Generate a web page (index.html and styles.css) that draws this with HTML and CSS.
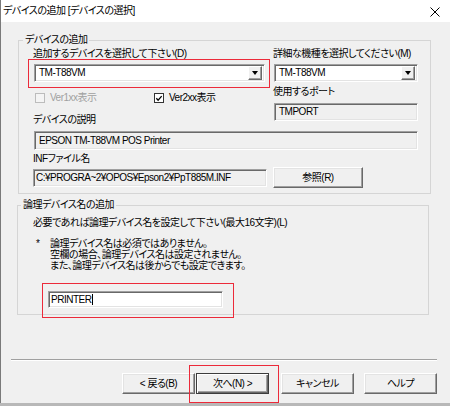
FILE: index.html
```html
<!DOCTYPE html>
<html lang="ja">
<head>
    <meta charset="UTF-8">
    <title>デバイスの追加 [デバイスの選択]</title>
    <link rel="stylesheet" href="styles.css">
</head>
<body>
    <div class="window">
        <div class="titlebar">
            <span class="title">デバイスの追加 [デバイスの選択]</span>
            <svg class="close" width="10" height="10" viewBox="0 0 10 10">
                <path d="M0.5 0.5 L9.5 9.5 M9.5 0.5 L0.5 9.5" stroke="#000" stroke-width="1" fill="none"/>
            </svg>
        </div>

        <div class="dialog">
            <fieldset class="group group-device">
                <legend>デバイスの追加</legend>
                <div class="device-top">
                    <div class="col">
                        <div class="label">追加するデバイスを選択して下さい(D)</div>
                        <div class="marked combo-main">
                            <div class="combo">
                                <span class="value">TM-T88VM</span>
                                <span class="drop"></span>
                            </div>
                            <span class="mark mark-combo"></span>
                        </div>
                        <div class="checks">
                            <label class="check disabled"><span class="box"></span>Ver1xx表示</label>
                            <label class="check"><span class="box on">
                                <svg width="9" height="9" viewBox="0 0 9 9">
                                    <path d="M1.5 4.2 L3.5 6.4 L7.5 1.8" stroke="#000" stroke-width="1.4" fill="none"/>
                                </svg>
                            </span>Ver2xx表示</label>
                        </div>
                        <div class="label label-desc">デバイスの説明</div>
                    </div>
                    <div class="col">
                        <div class="label">詳細な機種を選択してください(M)</div>
                        <div class="combo combo-model">
                            <span class="value">TM-T88VM</span>
                            <span class="drop"></span>
                        </div>
                        <div class="label label-port">使用するポート</div>
                        <div class="field field-port">TMPORT</div>
                    </div>
                </div>
                <div class="field field-desc">EPSON TM-T88VM POS Printer</div>
                <div class="label label-inf">INFファイル名</div>
                <div class="inf-row">
                    <div class="field field-inf">C:¥PROGRA~2¥OPOS¥Epson2¥PpT885M.INF</div>
                    <button class="btn btn-browse">参照(R)</button>
                </div>
            </fieldset>

            <fieldset class="group group-name">
                <legend>論理デバイス名の追加</legend>
                <div class="label">必要であれば論理デバイス名を設定して下さい(最大16文字)(L)</div>
                <div class="note">
                    <span class="star">*</span>
                    <div class="note-text">
                        論理デバイス名は必須ではありません。<br>
                        空欄の場合、論理デバイス名は設定されません。<br>
                        また、論理デバイス名は後からでも設定できます。
                    </div>
                </div>
                <div class="marked name-wrap">
                    <div class="input">PRINTER<span class="caret"></span></div>
                    <span class="mark mark-name"></span>
                </div>
            </fieldset>

            <div class="separator"></div>

            <div class="buttons">
                <button class="btn btn-back">&lt; 戻る(B)</button>
                <div class="marked">
                    <button class="btn btn-default">次へ(N) &gt;</button>
                    <span class="mark mark-next"></span>
                </div>
                <button class="btn btn-cancel">キャンセル</button>
                <button class="btn btn-help">ヘルプ</button>
            </div>
        </div>
    </div>
</body>
</html>
```

FILE: styles.css
```css
:root {
    --face: #f0f0f0;
    --shadow: #a0a0a0;
    --dark-shadow: #696969;
    --light: #e3e3e3;
    --group-line: #d5d5d5;
    --mark-red: #ec2a3a;
}

* {
    margin: 0;
    padding: 0;
    box-sizing: border-box;
}

html, body {
    width: 450px;
    height: 406px;
    overflow: hidden;
}

body {
    background: #b8b8b8;
    font-family: 'Liberation Sans', 'Noto Sans CJK JP', sans-serif;
    font-size: 10px;
    font-feature-settings: "palt";
    letter-spacing: -0.5px;
    color: #000;
    line-height: 12px;
}

.window {
    width: 450px;
    height: 403px;
    background: var(--face);
    border-left: 1px solid #7a7a7a;
}

.titlebar {
    height: 22px;
    background: #fff;
    display: flex;
    align-items: center;
    justify-content: space-between;
    padding: 0 10px 0 2px;
}

.close {
    display: block;
    margin-top: 1px;
}

/* group boxes */
.group {
    border: 1px solid var(--group-line);
    min-width: 0;
}

.group legend {
    padding: 0 2px;
    line-height: 12px;
}

.group-device {
    margin: 12px 0 0 17px;
    width: 413px;
    padding: 2px 12px 5px 14px;
}

.group-device legend {
    margin-left: -10px;
}

.group-name {
    margin: 5px 0 0 16px;
    width: 412px;
    padding: 6px 12px 6px 15px;
}

.group-name legend {
    margin-left: -12px;
}

.label {
    height: 12px;
    white-space: nowrap;
}

.device-top {
    display: grid;
    grid-template-columns: 236px 145px;
    column-gap: 4px;
    align-items: start;
}

.col {
    display: flex;
    flex-direction: column;
}

/* red annotation frames */
.marked {
    position: relative;
}

.mark {
    position: absolute;
    border: 1px solid var(--mark-red);
    pointer-events: none;
}

.mark-combo {
    top: -5px;
    left: -6px;
    right: -5px;
    bottom: -6px;
}

.mark-name {
    top: -8px;
    left: -6px;
    right: -11px;
    bottom: -10px;
}

.mark-next {
    top: -8px;
    left: -7px;
    right: -10px;
    bottom: -9px;
}

/* sunken controls */
.combo,
.field,
.input {
    height: 18px;
    border: 1px solid;
    border-color: var(--shadow) #fff #fff var(--shadow);
    box-shadow: inset 1px 1px var(--dark-shadow), inset -1px -1px var(--light);
    display: flex;
    align-items: center;
    padding-left: 4px;
    white-space: nowrap;
}

.combo {
    background: #fff;
    justify-content: space-between;
    padding-right: 2px;
}

.combo-main {
    margin-top: 4px;
    margin-left: 1px;
    width: 231px;
}

.combo-main .combo {
    width: 100%;
}

.combo-model {
    margin-top: 4px;
    margin-left: 1px;
}

.drop {
    width: 14px;
    height: 14px;
    background: var(--face);
    border: 1px solid;
    border-color: #fff var(--dark-shadow) var(--dark-shadow) #fff;
    box-shadow: inset -1px -1px var(--shadow);
    position: relative;
}

.drop::after {
    content: '';
    position: absolute;
    left: 3px;
    top: 4px;
    border-left: 3.5px solid transparent;
    border-right: 3.5px solid transparent;
    border-top: 4px solid #000;
}

.field {
    background: var(--face);
}

.label-port {
    margin-top: 4px;
}

.field-port {
    margin-top: 5px;
    margin-left: 1px;
}

/* check boxes */
.checks {
    display: flex;
    margin-top: 9px;
    height: 14px;
    align-items: center;
    padding-left: 2px;
}

.check {
    display: flex;
    align-items: center;
    gap: 5px;
}

.check:first-child {
    width: 119px;
}

.check.disabled {
    color: #a0a0a0;
}

.box {
    width: 10px;
    height: 10px;
    border: 1px solid #333;
    background: #fff;
    display: flex;
    align-items: center;
    justify-content: center;
}

.disabled .box {
    border-color: #bcbcbc;
    background: #f4f4f4;
}

.label-desc {
    margin-top: 9px;
}

.field-desc {
    margin-top: 5px;
    margin-left: 1px;
    height: 19px;
}

.label-inf {
    margin-top: 3px;
}

.inf-row {
    display: flex;
    align-items: center;
    gap: 6px;
    margin-top: 2px;
}

.field-inf {
    width: 234px;
    padding-left: 2px;
}

/* buttons */
.btn {
    font: inherit;
    font-feature-settings: "palt";
    letter-spacing: -0.5px;
    width: 73px;
    height: 21px;
    background: var(--face);
    color: #000;
    border: 1px solid;
    border-color: #fff var(--dark-shadow) var(--dark-shadow) #fff;
    box-shadow: inset -1px -1px var(--shadow), inset 1px 1px var(--light);
    display: flex;
    align-items: center;
    justify-content: center;
}

.btn-browse {
    width: 90px;
}

.btn-default {
    border-color: #3c3c3c;
    box-shadow: inset 1px 1px #fff, inset -1px -1px var(--dark-shadow), inset -2px -2px var(--shadow);
}

/* logical name */
.note {
    display: flex;
    margin-top: 9px;
    line-height: 11px;
}

.star {
    width: 17px;
    padding-left: 3px;
}

.name-wrap {
    margin-top: 20px;
    margin-left: 15px;
    width: 175px;
}

.input {
    height: 17px;
    background: #fff;
    padding-left: 2px;
}

.caret {
    display: inline-block;
    width: 1px;
    height: 11px;
    background: #000;
    margin-left: 1px;
}

.separator {
    margin: 44px 0 0 10px;
    width: 426px;
    height: 2px;
    border-top: 1px solid var(--shadow);
    border-bottom: 1px solid #fff;
}

.buttons {
    display: flex;
    justify-content: flex-end;
    margin-top: 12px;
    padding-right: 13px;
}

.btn-back {
    margin-right: 1px;
}

.btn-cancel {
    margin-left: 12px;
}

.btn-help {
    margin-left: 10px;
}
```
